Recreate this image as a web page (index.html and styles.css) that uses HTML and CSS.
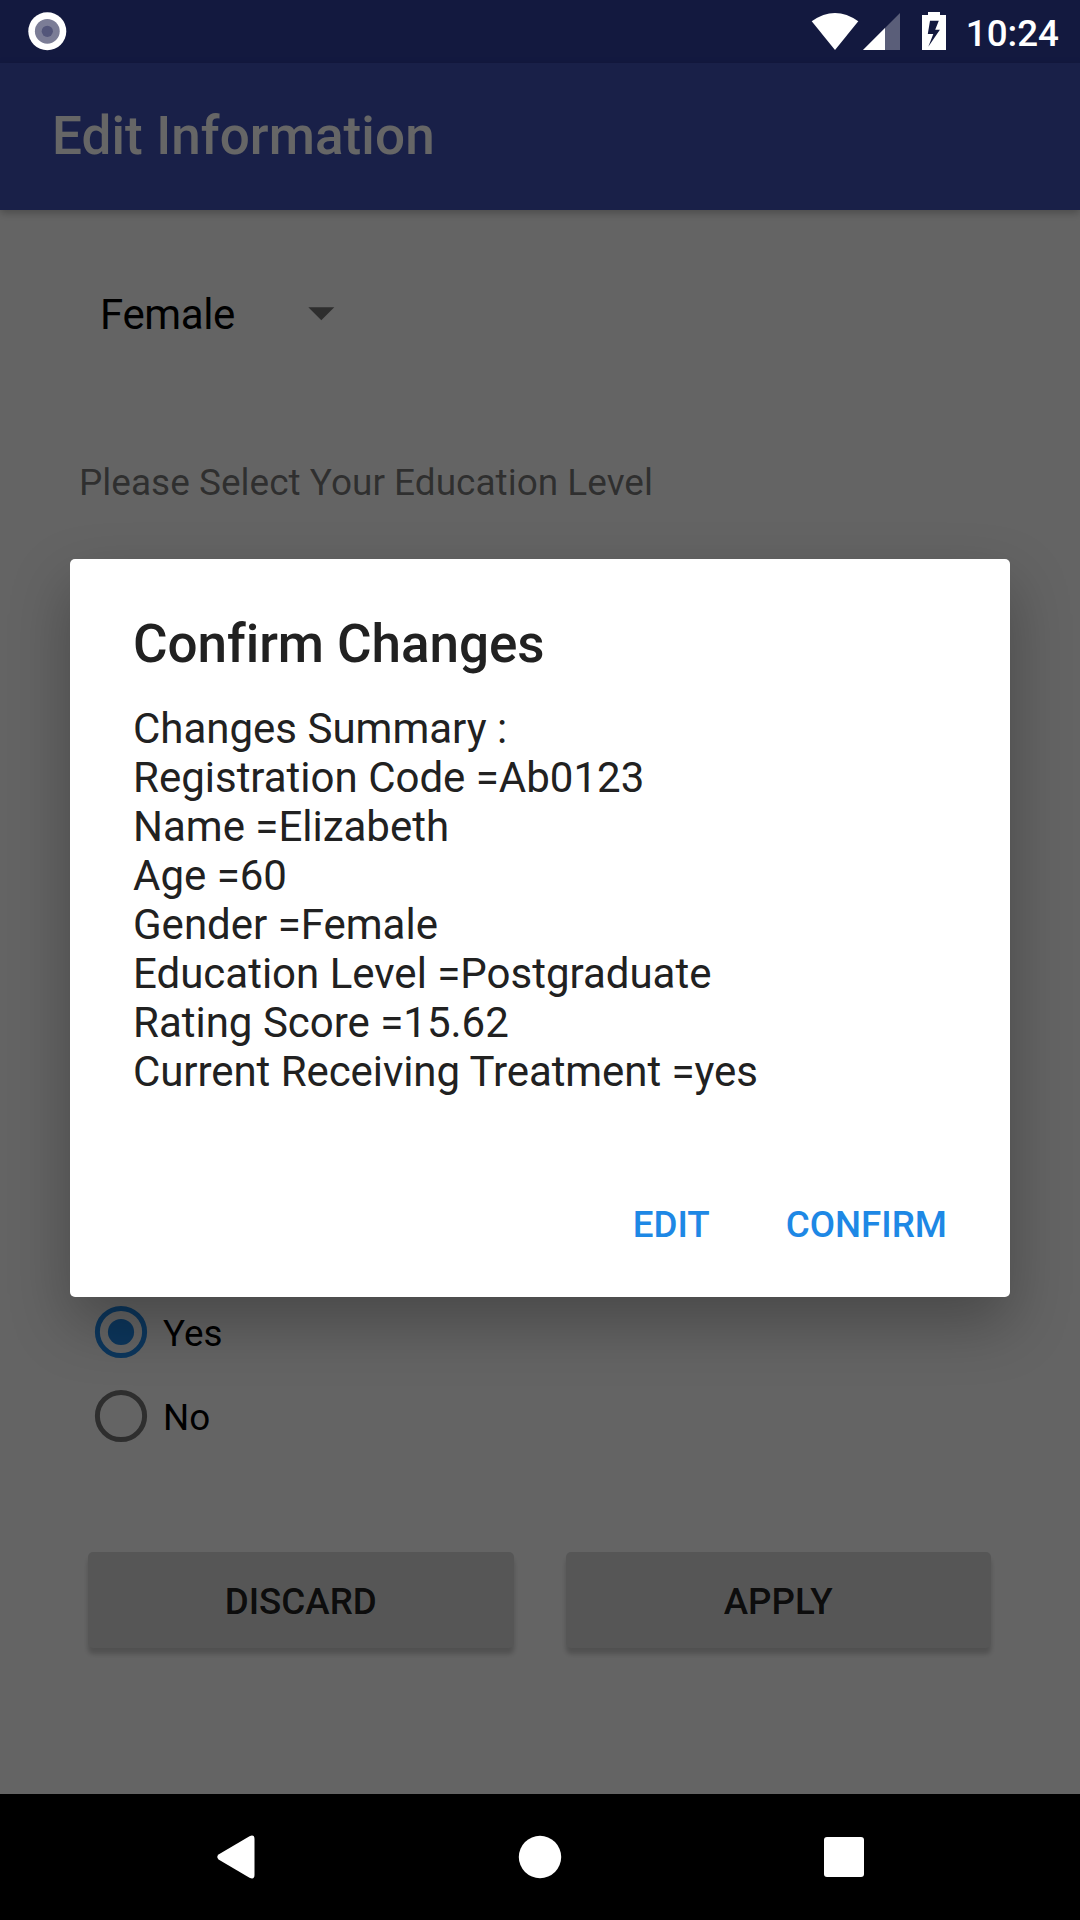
FILE: index.html
```html
<!DOCTYPE html>
<html lang="en">
<head>
<meta charset="utf-8">
<title>Edit Information</title>
<link rel="stylesheet" href="styles.css">
</head>
<body>
<div class="screen">
  <header class="status-bar">
    <svg class="status-icon" width="40" height="40" viewBox="0 0 40 40">
      <circle cx="20.3" cy="20.3" r="19" fill="#fff"/>
      <circle cx="20.3" cy="20.3" r="12.4" fill="#7b7d96"/>
      <circle cx="20.3" cy="20.3" r="5.6" fill="#53567a"/>
    </svg>
    <div class="status-right">
      <svg class="status-icon" width="136" height="40" viewBox="811 12 136 40">
        <path d="M811.7 21.3Q835 4.7 858.3 21.3L835 50Z" fill="#fff"/>
        <path d="M863 50L900 13V50Z" fill="#fff" fill-opacity=".3"/>
        <path d="M863 50L885 28V50Z" fill="#fff"/>
        <path fill-rule="evenodd" d="M928 12H940V15H946V50H922V15H928ZM930 20.7L927.8 34H933.3L928.3 46.8L939.9 29.7H935.2L938.8 20.7Z" fill="#fff"/>
      </svg>
      <span class="clock">10:24</span>
    </div>
  </header>
  <div class="app-bar"><h1 class="app-title">Edit Information</h1></div>
  <main class="form">
    <div class="spinner">
      <span class="spinner-value">Female</span>
      <svg width="27" height="14" viewBox="0 0 27 14"><path d="M.3 .3H26.3L13.3 13.3Z" fill="#000" fill-opacity=".54"/></svg>
    </div>
    <p class="field-label">Please Select Your Education Level</p>
    <div class="radio-group">
      <label class="radio">
        <svg width="54" height="54" viewBox="0 0 54 54"><circle cx="27" cy="27" r="23.6" fill="none" stroke="#1e88e5" stroke-width="5"/><circle cx="27" cy="27" r="13.1" fill="#1e88e5"/></svg>
        <span>Yes</span>
      </label>
      <label class="radio">
        <svg width="54" height="54" viewBox="0 0 54 54"><circle cx="27" cy="27" r="23.6" fill="none" stroke="#000" stroke-opacity=".54" stroke-width="5"/></svg>
        <span>No</span>
      </label>
    </div>
    <div class="form-actions">
      <button class="raised-button">DISCARD</button>
      <button class="raised-button">APPLY</button>
    </div>
  </main>
  <nav class="nav-bar">
    <svg width="1080" height="126" viewBox="0 0 1080 126" fill="#fff">
      <path d="M218.5 60.6L249.5 42.2Q254.5 40.2 254.5 45V81Q254.5 86 249.5 83.8L218.5 65.4Q216 63 218.5 60.6Z"/>
      <circle cx="540" cy="63" r="21.2"/>
      <rect x="824" y="43" width="40" height="40" rx="3"/>
    </svg>
  </nav>
  <div class="scrim">
    <section class="dialog" role="dialog">
      <h2 class="dialog-title">Confirm Changes</h2>
      <p class="dialog-message">Changes Summary :<br>Registration Code =Ab0123<br>Name =Elizabeth<br>Age =60<br>Gender =Female<br>Education Level =Postgraduate<br>Rating Score =15.62<br><span class="dialog-last-line">Current Receiving Treatment =yes</span></p>
      <div class="dialog-actions">
        <button class="text-button">EDIT</button>
        <button class="text-button">CONFIRM</button>
      </div>
    </section>
  </div>
</div>
</body>
</html>
```

FILE: styles.css
```css
* {
  box-sizing: border-box;
}

body {
  margin: 0;
  font-family: Roboto, sans-serif;
  font-size: 36.75px;
  color: #000;
}

h1, h2, p {
  margin: 0;
}

svg {
  display: block;
  flex: none;
}

button {
  border: 0;
  padding: 0;
  font: inherit;
  font-weight: 500;
}

.screen {
  position: relative;
  display: flex;
  flex-direction: column;
  width: 1080px;
  height: 1920px;
  overflow: hidden;
  background: #fafafa;
}

.status-bar {
  display: flex;
  justify-content: space-between;
  height: 63px;
  padding: 11px 21px 0 27px;
  background: #303f9f;
}

.status-icon,
.clock {
  position: relative;
  z-index: 2;
}

.status-right {
  display: flex;
  gap: 19px;
  padding-top: 1px;
}

.clock {
  line-height: 43px;
  font-weight: 500;
  color: #fff;
}

.app-bar {
  display: flex;
  align-items: center;
  height: 147px;
  padding: 0 0 1px 52px;
  background: #3f51b5;
  box-shadow: 0 3px 8px rgba(0, 0, 0, .25);
}

.app-title {
  font-size: 53px;
  letter-spacing: .1px;
  font-weight: 500;
  color: #fff;
}

.form {
  display: flex;
  flex: 1;
  flex-direction: column;
  padding: 62px 89px 146px 79px;
}

.spinner {
  display: flex;
  align-items: center;
  justify-content: space-between;
  width: 235px;
  height: 84px;
  margin-left: 21px;
  font-size: 42px;
}

.spinner-value {
  letter-spacing: -.4px;
}

.field-label {
  margin-top: 105px;
  line-height: 44px;
  font-size: 37px;
  color: rgba(0, 0, 0, .54);
}

.radio-group {
  margin: auto 0 94px 15px;
}

.radio {
  display: flex;
  align-items: center;
  gap: 15px;
  height: 84px;
}

.radio span {
  padding-top: 2px;
}

.form-actions {
  display: grid;
  grid-template-columns: 1fr 1fr;
  gap: 52px;
  margin-left: 9px;
}

.raised-button {
  height: 96px;
  padding-top: 2px;
  border-radius: 5px;
  background: #d6d7d7;
  color: rgba(0, 0, 0, .87);
  box-shadow: 0 6px 5px rgba(0, 0, 0, .2);
}

.nav-bar {
  height: 126px;
  background: #000;
}

.scrim {
  position: absolute;
  inset: 0 0 126px;
  z-index: 1;
  display: flex;
  align-items: center;
  justify-content: center;
  padding: 63px 0 1px;
  background: rgba(0, 0, 0, .6);
}

.dialog {
  display: flex;
  flex-direction: column;
  width: 940px;
  height: 738px;
  padding: 54px 63px 42px;
  border-radius: 5px;
  background: #fff;
  color: #212121;
  box-shadow: 0 26px 60px rgba(0, 0, 0, .28);
}

.dialog-title {
  line-height: 62px;
  font-size: 53px;
  letter-spacing: -.05px;
  font-weight: 500;
}

.dialog-message {
  margin-top: 29px;
  line-height: 49px;
  font-size: 42px;
}

.dialog-last-line {
  letter-spacing: -.07px;
}

.dialog-actions {
  display: flex;
  justify-content: flex-end;
  gap: 76px;
  margin-top: auto;
}

.text-button {
  height: 62px;
  background: none;
  color: #1e88e5;
}
```
